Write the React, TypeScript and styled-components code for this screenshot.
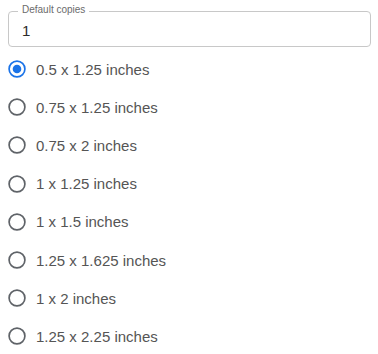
import React, { useState } from "react";
import styled, { createGlobalStyle } from "styled-components";

const Global = createGlobalStyle`
  html, body { margin: 0; padding: 0; background: #fff; }
  body { font-family: Arial, "Liberation Sans", sans-serif; }
  * { box-sizing: border-box; }
`;

const Page = styled.div`
  width: 378px;
  padding: 0 7px 0 8px;
  display: flex;
  flex-direction: column;
`;

const Field = styled.div`
  position: relative;
  margin-top: 11px;
  height: 36px;
  border: 1px solid #c8c8c8;
  border-radius: 4px;
  padding: 10px 0 0 13px;
`;

const FieldLabel = styled.span`
  position: absolute;
  top: -8px;
  left: 9px;
  padding: 0 4px;
  background: #fff;
  font-size: 10px;
  line-height: 12px;
  color: #6b6b6b;
`;

const FieldValue = styled.div`
  font-size: 15px;
  line-height: 17px;
  color: #2b2b2b;
`;

const List = styled.div`
  margin-top: 3px;
  display: flex;
  flex-direction: column;
`;

const Row = styled.label`
  height: 38.2px;
  display: flex;
  align-items: center;
  gap: 9px;
  cursor: pointer;
`;

const RadioIcon = styled.svg`
  width: 20px;
  height: 20px;
  margin-left: -1px;
  flex: none;
  display: block;
`;

const RowText = styled.span`
  font-size: 15px;
  line-height: 17px;
  color: #555;
`;

function Radio({ on }: { on: boolean }) {
  const c = on ? "#1a73e8" : "#5f6368";
  return (
    <RadioIcon viewBox="0 0 20 20">
      <circle cx="10" cy="10" r="7.9" fill="none" stroke={c} strokeWidth="1.7" />
      {on && <circle cx="10" cy="10" r="4.3" fill={c} />}
    </RadioIcon>
  );
}

const sizes = [
  "0.5 x 1.25 inches",
  "0.75 x 1.25 inches",
  "0.75 x 2 inches",
  "1 x 1.25 inches",
  "1 x 1.5 inches",
  "1.25 x 1.625 inches",
  "1 x 2 inches",
  "1.25 x 2.25 inches",
];

export default function App() {
  const [sel, setSel] = useState(0);
  return (
    <>
      <Global />
      <Page>
        <Field>
          <FieldLabel>Default copies</FieldLabel>
          <FieldValue>1</FieldValue>
        </Field>
        <List>
          {sizes.map((s, i) => (
            <Row key={s} onClick={() => setSel(i)}>
              <Radio on={sel === i} />
              <RowText>{s}</RowText>
            </Row>
          ))}
        </List>
      </Page>
    </>
  );
}
